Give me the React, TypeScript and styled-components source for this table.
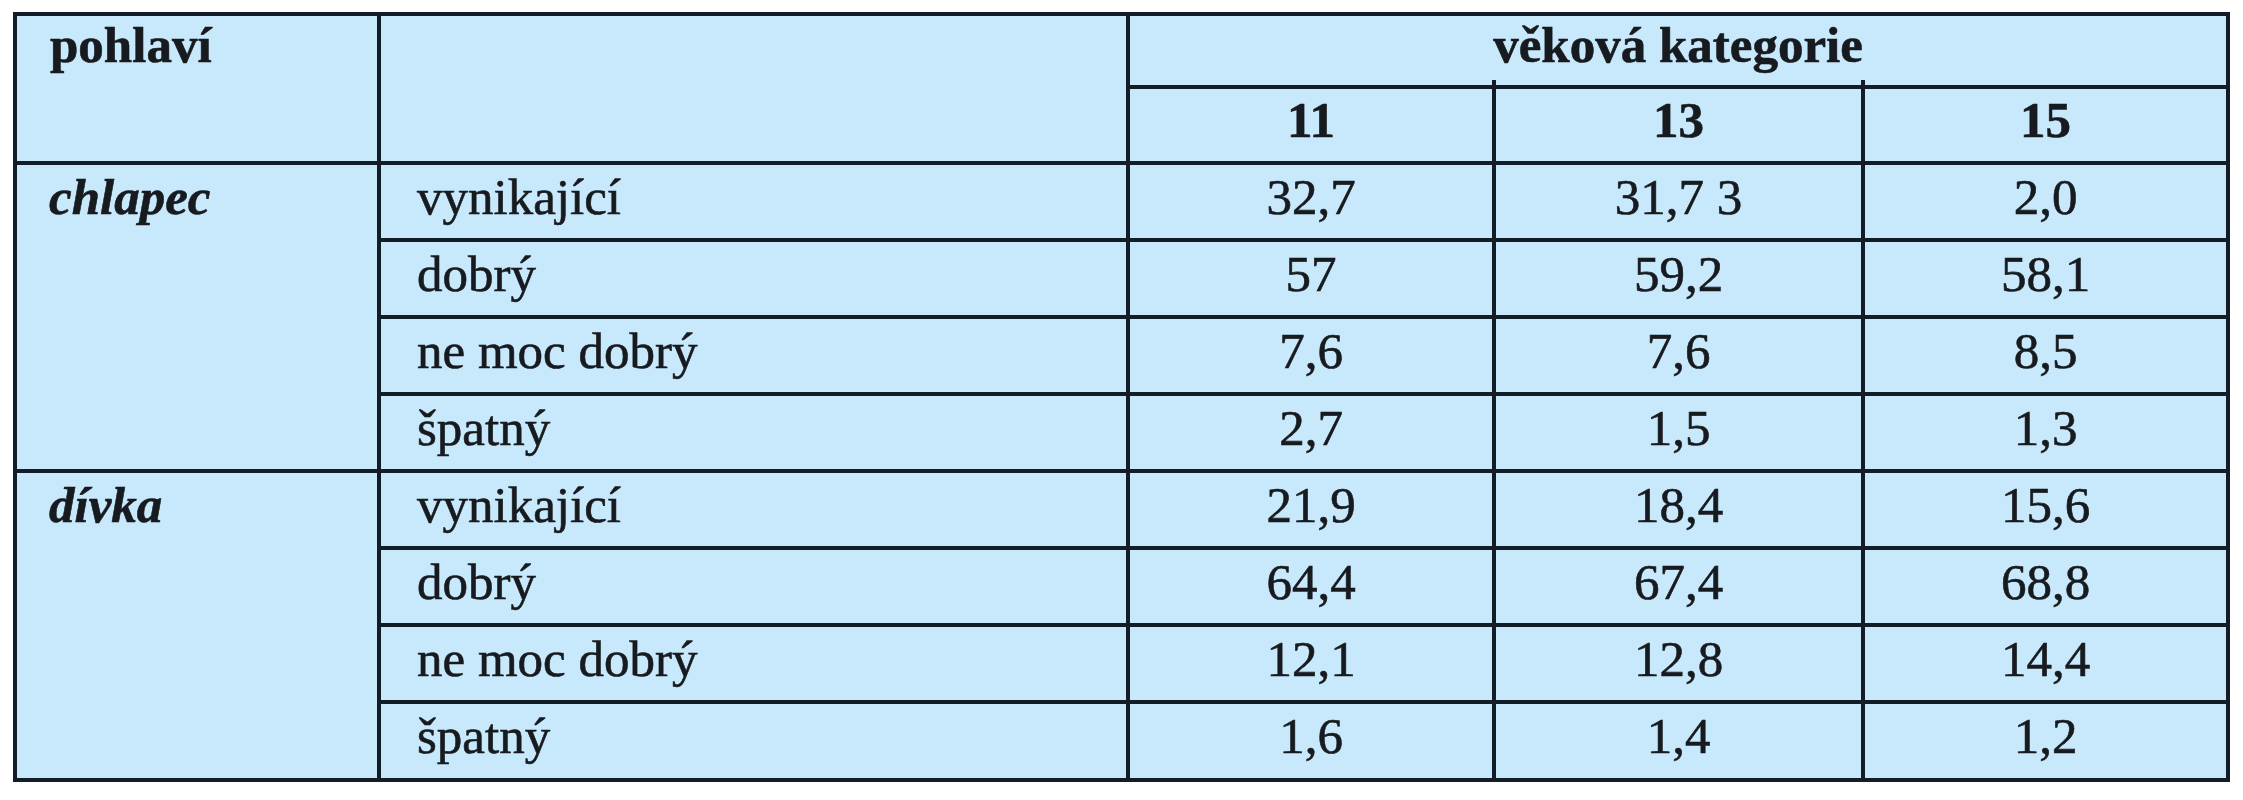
import React from 'react';
import styled, { createGlobalStyle } from 'styled-components';

type Row = { label: string; values: string[] };
type Group = { name: string; rows: Row[] };

const groups: Group[] = [
  {
    name: 'chlapec',
    rows: [
      { label: 'vynikající', values: ['32,7', '31,7 3', '2,0'] },
      { label: 'dobrý', values: ['57', '59,2', '58,1'] },
      { label: 'ne moc dobrý', values: ['7,6', '7,6', '8,5'] },
      { label: 'špatný', values: ['2,7', '1,5', '1,3'] },
    ],
  },
  {
    name: 'dívka',
    rows: [
      { label: 'vynikající', values: ['21,9', '18,4', '15,6'] },
      { label: 'dobrý', values: ['64,4', '67,4', '68,8'] },
      { label: 'ne moc dobrý', values: ['12,1', '12,8', '14,4'] },
      { label: 'špatný', values: ['1,6', '1,4', '1,2'] },
    ],
  },
];

const ages = ['11', '13', '15'];
const colWidths = [364, 749, 366, 369, 365];
const LINE = '4px solid #121d27';

const GlobalStyle = createGlobalStyle`
  body {
    margin: 0;
    background: #ffffff;
  }
`;

const Page = styled.div`
  padding: 12px 0 0 13px;
`;

const Table = styled.table`
  border-collapse: separate;
  border-spacing: 0;
  table-layout: fixed;
  width: 2217px;
  border-top: ${LINE};
  border-left: ${LINE};
  background: #c7e9fb;
  font-family: 'Liberation Serif', 'Times New Roman', serif;
  font-size: 51px;
  line-height: 1;
  color: #171a1e;
  -webkit-text-stroke: 0.6px #171a1e;
`;

const Col = styled.col<{ $w: number }>`
  width: ${(p) => p.$w}px;
`;

const Cell = styled.td<{ $align?: 'left' | 'center'; $h?: number }>`
  box-sizing: border-box;
  border-right: ${LINE};
  border-bottom: ${LINE};
  vertical-align: top;
  padding: 7px 0 0 ${(p) => (p.$align === 'center' ? 0 : 36)}px;
  text-align: ${(p) => p.$align ?? 'left'};
  height: ${(p) => (p.$h ? `${p.$h}px` : 'auto')};
  white-space: nowrap;
`;

const HeadCell = styled(Cell)`
  font-weight: bold;
  padding-top: 4px;
`;

const AgeCell = styled(HeadCell)<{ $tick?: boolean }>`
  position: relative;
  padding-top: 6px;
  &::after {
    content: '';
    display: ${(p) => (p.$tick ? 'block' : 'none')};
    position: absolute;
    right: -4px;
    top: -9px;
    width: 4px;
    height: 5px;
    background: #121d27;
  }
`;

const GroupCell = styled(Cell)`
  font-weight: bold;
  font-style: italic;
  padding-left: 32px;
`;

const SexHead = styled(HeadCell)`
  padding-left: 33px;
`;

export default function App() {
  return (
    <>
      <GlobalStyle />
      <Page>
        <Table>
          <colgroup>
            {colWidths.map((w, i) => (
              <Col key={i} $w={w} />
            ))}
          </colgroup>
          <thead>
            <tr>
              <SexHead rowSpan={2}>pohlaví</SexHead>
              <HeadCell rowSpan={2} />
              <HeadCell colSpan={3} $align="center" $h={73}>
                věková kategorie
              </HeadCell>
            </tr>
            <tr>
              {ages.map((a, i) => (
                <AgeCell key={a} $align="center" $h={76} $tick={i < 2}>
                  {a}
                </AgeCell>
              ))}
            </tr>
          </thead>
          <tbody>
            {groups.map((g, gi) =>
              g.rows.map((r, ri) => (
                <tr key={g.name + r.label}>
                  {ri === 0 && <GroupCell rowSpan={g.rows.length}>{g.name}</GroupCell>}
                  <Cell $h={gi === 1 && ri === 3 ? 78 : 77}>{r.label}</Cell>
                  {r.values.map((v, vi) => (
                    <Cell key={vi} $align="center">
                      {v}
                    </Cell>
                  ))}
                </tr>
              ))
            )}
          </tbody>
        </Table>
      </Page>
    </>
  );
}
